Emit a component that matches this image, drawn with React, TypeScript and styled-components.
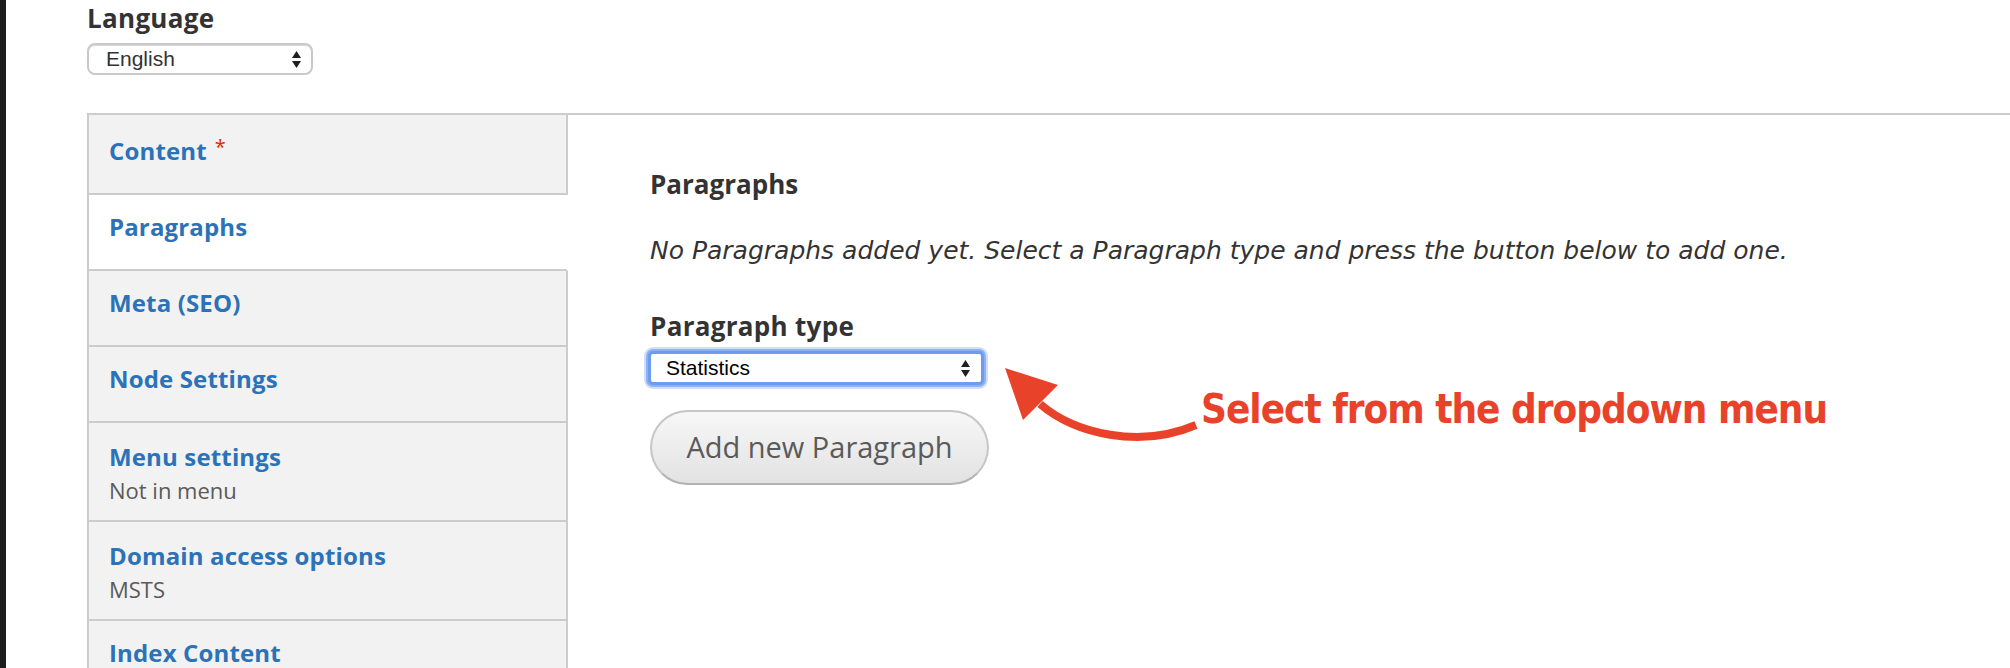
import React from "react";
import styled, { createGlobalStyle } from "styled-components";

const GlobalStyle = createGlobalStyle`
  html, body {
    margin: 0;
    padding: 0;
    background: #ffffff;
    overflow: hidden;
  }
  body {
    font-family: "Open Sans", "DejaVu Sans", sans-serif;
    color: #333333;
  }
  * { box-sizing: border-box; }
`;

const Page = styled.div`
  display: flex;
  width: 100vw;
  min-height: 668px;
`;

const SideStrip = styled.div`
  width: 6px;
  flex-shrink: 0;
  background: #1d1d1d;
`;

const Main = styled.main`
  flex: 1;
  padding-left: 81px;
  min-width: 0;
`;

const FieldLabel = styled.div`
  font-weight: 700;
  font-size: 26px;
  letter-spacing: 0.3px;
  line-height: 36px;
  color: #333333;
`;

const SelectBox = styled.div<{ $width: number; $focused?: boolean }>`
  display: flex;
  align-items: center;
  justify-content: space-between;
  width: ${(p) => p.$width}px;
  height: ${(p) => (p.$focused ? 34 : 32)}px;
  margin-left: ${(p) => (p.$focused ? -2 : 0)}px;
  padding: 0 ${(p) => (p.$focused ? 11 : 10)}px 0 ${(p) => (p.$focused ? 15 : 17)}px;
  background: #ffffff;
  border: ${(p) => (p.$focused ? "3px solid #6b9cf0" : "2px solid #c9c9c9")};
  border-radius: ${(p) => (p.$focused ? 5 : 8)}px;
  box-shadow: ${(p) =>
    p.$focused
      ? "0 0 0 2px rgba(120, 162, 240, 0.75), 0 0 0 4px rgba(150, 185, 245, 0.45)"
      : "inset 0 1px 0 #d8d8d8"};
  font-family: "Liberation Sans", Arial, sans-serif;
  font-size: 21px;
  color: ${(p) => (p.$focused ? "#000000" : "#333333")};
`;

const SelectArrows = () => (
  <svg width="9" height="17" viewBox="0 0 9 17">
    <polygon points="0,7 4.5,0 9,7" fill="#1f1f1f" />
    <polygon points="0,10 9,10 4.5,17" fill="#1f1f1f" />
  </svg>
);

const VerticalTabs = styled.div`
  display: flex;
  margin-top: 38px;
  border-top: 2px solid #cccccc;
  min-height: 560px;
`;

const TabMenu = styled.ul`
  list-style: none;
  margin: 0;
  padding: 0;
  width: 481px;
  flex-shrink: 0;
  border-left: 2px solid #cccccc;
`;

const TabItem = styled.li<{ $active?: boolean; $hasSummary?: boolean }>`
  padding: ${(p) => (p.$hasSummary ? "16px 22px 15px 20px" : "14px 22px 24px 20px")};
  background: ${(p) => (p.$active ? "#ffffff" : "#f2f2f2")};
  border-bottom: 2px solid #cccccc;
  border-right: 2px solid ${(p) => (p.$active ? "transparent" : "#cccccc")};
`;

const TabTitle = styled.a`
  display: block;
  font-weight: 700;
  font-size: 24px;
  letter-spacing: 0.15px;
  line-height: 36px;
  color: #2c72b8;
  text-decoration: none;
`;

const Required = styled.span`
  color: #e62600;
  font-weight: 400;
  font-size: 20px;
  vertical-align: 6px;
  margin-left: 8px;
`;

const TabSummary = styled.div`
  font-size: 22px;
  line-height: 30px;
  color: #5a5a5a;
`;

const Pane = styled.section`
  position: relative;
  flex: 1;
  padding: 51px 0 0 82px;
`;

const Heading = styled.h3`
  margin: 0;
  font-weight: 700;
  font-size: 26px;
  line-height: 36px;
  color: #333333;
`;

const Description = styled.p`
  margin: 31px 0 0;
  font-family: "DejaVu Sans", "Open Sans", sans-serif;
  font-style: italic;
  font-size: 25px;
  line-height: 36px;
  color: #333333;
`;

const TypeField = styled.div`
  margin-top: 39px;
  display: flex;
  flex-direction: column;
  align-items: flex-start;
  gap: 7px;
`;

const AddButton = styled.button`
  margin-top: 25px;
  width: 339px;
  height: 75px;
  border-radius: 38px;
  border: 2px solid #c6c6c6;
  border-bottom-color: #b3b3b3;
  background: linear-gradient(#f7f7f7, #e2e2e2);
  font-family: "Open Sans", "DejaVu Sans", sans-serif;
  font-size: 29px;
  color: #5a5a5a;
  padding: 0 0 2px;
`;

const Annotation = styled.div`
  position: absolute;
  left: 432px;
  top: 244px;
  display: flex;
  align-items: flex-start;
`;

const AnnotationText = styled.div`
  margin-top: 26px;
  margin-left: 1px;
  font-family: "DejaVu Sans", sans-serif;
  font-stretch: condensed;
  font-weight: 700;
  font-size: 40px;
  letter-spacing: -1px;
  line-height: 48px;
  color: #e8432a;
  white-space: nowrap;
`;

const CurvedArrow = () => (
  <svg width="200" height="90" viewBox="0 0 200 90">
    <path
      d="M40 45 C 75 75, 140 90, 196 66"
      fill="none"
      stroke="#e8432a"
      strokeWidth="8"
    />
    <polygon points="5,9 58,26 23,61" fill="#e8432a" />
  </svg>
);

const tabs = [
  { title: "Content", required: true },
  { title: "Paragraphs", active: true },
  { title: "Meta (SEO)" },
  { title: "Node Settings" },
  { title: "Menu settings", summary: "Not in menu" },
  { title: "Domain access options", summary: "MSTS" },
  { title: "Index Content" },
];

export default function App() {
  return (
    <>
      <GlobalStyle />
      <Page>
        <SideStrip />
        <Main>
          <FieldLabel>Language</FieldLabel>
          <SelectBox $width={226} style={{ marginTop: 7 }}>
            <span>English</span>
            <SelectArrows />
          </SelectBox>
          <VerticalTabs>
            <TabMenu>
              {tabs.map((t) => (
                <TabItem key={t.title} $active={t.active} $hasSummary={!!t.summary}>
                  <TabTitle href="#">
                    {t.title}
                    {t.required && <Required>*</Required>}
                  </TabTitle>
                  {t.summary && <TabSummary>{t.summary}</TabSummary>}
                </TabItem>
              ))}
            </TabMenu>
            <Pane>
              <Heading>Paragraphs</Heading>
              <Description>
                No Paragraphs added yet. Select a Paragraph type and press the button below to add one.
              </Description>
              <TypeField>
                <FieldLabel>Paragraph type</FieldLabel>
                <SelectBox $width={336} $focused>
                  <span>Statistics</span>
                  <SelectArrows />
                </SelectBox>
              </TypeField>
              <AddButton type="button">Add new Paragraph</AddButton>
              <Annotation>
                <CurvedArrow />
                <AnnotationText>Select from the dropdown menu</AnnotationText>
              </Annotation>
            </Pane>
          </VerticalTabs>
        </Main>
      </Page>
    </>
  );
}
